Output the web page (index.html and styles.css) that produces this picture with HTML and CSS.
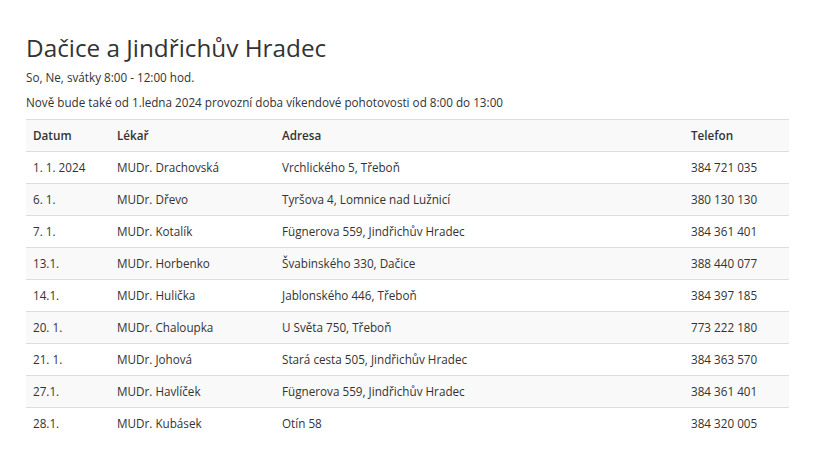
FILE: index.html
```html
<!DOCTYPE html>
<html lang="cs">
<head>
<meta charset="utf-8">
<link rel="stylesheet" href="styles.css">
</head>
<body>
<div class="page">
  <h1 class="title">Dačice a Jindřichův Hradec</h1>
  <p class="note">So, Ne, svátky 8:00 - 12:00 hod.</p>
  <p class="note">Nově bude také od 1.ledna 2024 provozní doba víkendové pohotovosti od 8:00 do 13:00</p>
  <table class="tbl">
    <colgroup>
      <col class="c1"><col class="c2"><col class="c3"><col class="c4">
    </colgroup>
    <thead>
      <tr><th>Datum</th><th>Lékař</th><th>Adresa</th><th>Telefon</th></tr>
    </thead>
    <tbody>
      <tr><td>1. 1. 2024</td><td>MUDr. Drachovská</td><td>Vrchlického 5, Třeboň</td><td>384 721 035</td></tr>
      <tr><td>6. 1.</td><td>MUDr. Dřevo</td><td>Tyršova 4, Lomnice nad Lužnicí</td><td>380 130 130</td></tr>
      <tr><td>7. 1.</td><td>MUDr. Kotalík</td><td>Fügnerova 559, Jindřichův Hradec</td><td>384 361 401</td></tr>
      <tr><td>13.1.</td><td>MUDr. Horbenko</td><td>Švabinského 330, Dačice</td><td>388 440 077</td></tr>
      <tr><td>14.1.</td><td>MUDr. Hulička</td><td>Jablonského 446, Třeboň</td><td>384 397 185</td></tr>
      <tr><td>20. 1.</td><td>MUDr. Chaloupka</td><td>U Světa 750, Třeboň</td><td>773 222 180</td></tr>
      <tr><td>21. 1.</td><td>MUDr. Johová</td><td>Stará cesta 505, Jindřichův Hradec</td><td>384 363 570</td></tr>
      <tr><td>27.1.</td><td>MUDr. Havlíček</td><td>Fügnerova 559, Jindřichův Hradec</td><td>384 361 401</td></tr>
      <tr><td>28.1.</td><td>MUDr. Kubásek</td><td>Otín 58</td><td>384 320 005</td></tr>
    </tbody>
  </table>
</div>
</body>
</html>
```
FILE: styles.css
```css
html, body {
  margin: 0;
  padding: 0;
  background: #fff;
}
body {
  font-family: "Open Sans", "Liberation Sans", sans-serif;
  font-size: 11.7px;
  color: #333;
}
.page {
  width: 763px;
  padding: 35px 0 0 26px;
}
.title {
  font-size: 24.3px;
  font-weight: 400;
  line-height: 26px;
  margin: 0 0 8px 0;
  color: #333;
}
.note {
  margin: 0 0 8px 0;
  line-height: 17px;
}
.tbl {
  width: 763px;
  border-collapse: collapse;
  border-spacing: 0;
}
.c1 { width: 84px; }
.c2 { width: 165px; }
.c3 { width: 409px; }
.c4 { width: 105px; }
.tbl th, .tbl td {
  text-align: left;
  padding: 7px 7px;
  line-height: 17px;
  border-top: 1px solid #ddd;
  vertical-align: top;
}
.tbl th {
  font-weight: 600;
  background: #f9f9f9;
}
.tbl tbody tr:nth-child(even) td {
  background: #f9f9f9;
}
```
